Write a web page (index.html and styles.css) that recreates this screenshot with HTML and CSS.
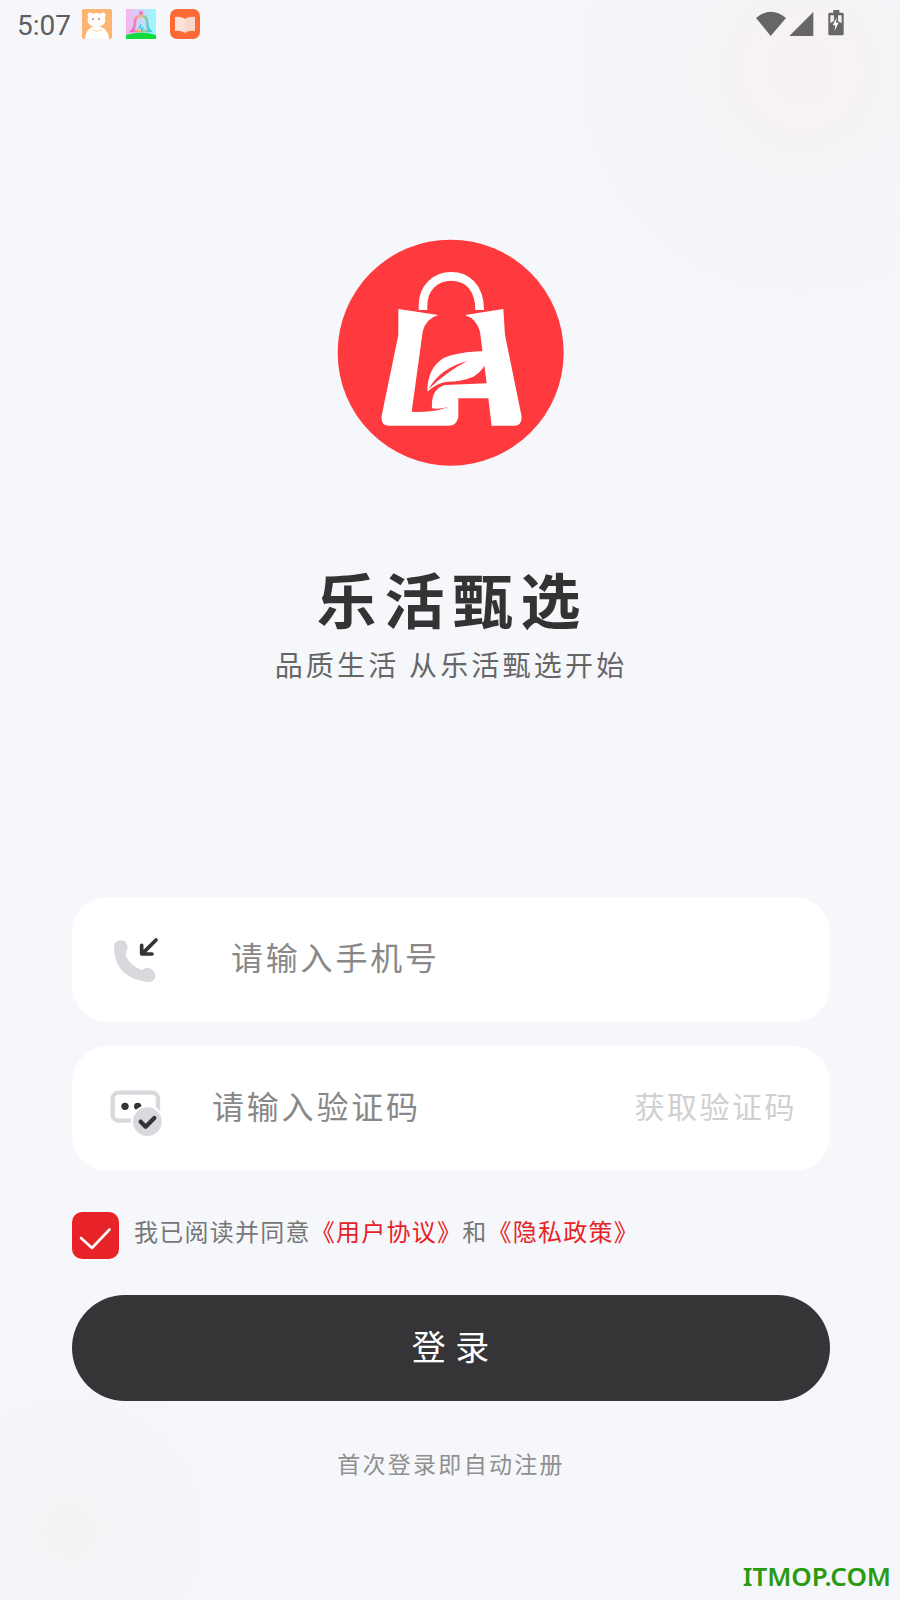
FILE: index.html
```html
<!DOCTYPE html>
<html lang="zh-CN">
<head>
    <meta charset="UTF-8">
    <meta name="viewport" content="width=device-width, initial-scale=1.0">
    <title>乐活甄选</title>
    <link rel="stylesheet" href="styles.css">
</head>
<body>
    <div class="page">
        <div class="status-bar">
            <span class="status-time">5:07</span>
            <div class="status-apps">
                <svg class="app-icon" viewBox="0 0 30 30">
                    <rect width="30" height="30" rx="2" fill="#fcb46e"/>
                    <circle cx="8" cy="6" r="2.5" fill="#fff"/>
                    <circle cx="21" cy="6" r="2.5" fill="#fff"/>
                    <ellipse cx="14.5" cy="11" rx="9" ry="7" fill="#fff"/>
                    <path d="M3 30 Q4 18 14.5 17 Q26 18 27 30 Z" fill="#fff"/>
                    <circle cx="11" cy="10" r="1" fill="#c98a50"/>
                    <circle cx="17" cy="10" r="1" fill="#c98a50"/>
                    <path d="M10 21 Q15 24 20 21" stroke="#fcd3a8" fill="none"/>
                </svg>
                <svg class="app-icon" viewBox="0 0 30 30">
                    <defs>
                        <linearGradient id="bellBg" x1="0" y1="0" x2="1" y2="0">
                            <stop offset="0" stop-color="#fab4ee"/>
                            <stop offset="1" stop-color="#96fbff"/>
                        </linearGradient>
                        <linearGradient id="bellLine" x1="0" y1="0" x2="1" y2="0">
                            <stop offset="0" stop-color="#f062d0"/>
                            <stop offset="0.5" stop-color="#f2c060"/>
                            <stop offset="1" stop-color="#30d0e0"/>
                        </linearGradient>
                    </defs>
                    <rect width="30" height="30" fill="url(#bellBg)"/>
                    <path d="M0 30 V26 Q15 21 30 26 V30 Z" fill="#0fdc3c"/>
                    <path d="M6 22 Q9 19 9 13 Q9 7 15 7 Q21 7 21 13 Q21 19 24 22 Z" fill="none" stroke="url(#bellLine)" stroke-width="2.6"/>
                    <circle cx="15" cy="4" r="2.2" fill="#f07ac0"/>
                    <path d="M15 14 L12 20 L15 19 L15 26 L18 18 L15 19 Z" fill="#40c8e0"/>
                </svg>
                <svg class="app-icon" viewBox="0 0 30 30">
                    <rect width="30" height="30" rx="7" fill="#fe6a35"/>
                    <path d="M5 8 Q11 7 15 10 V24 Q11 21 5 22 Z" fill="#fbe3d8"/>
                    <path d="M25 8 Q19 7 15 10 V24 Q19 21 25 22 Z" fill="#f8d8ca"/>
                </svg>
            </div>
            <svg class="status-right" viewBox="0 0 510 150">
                <path d="M78 54 Q122 16 168 54 L122 108 Z" fill="#666"/>
                <path d="M178 108 L250 36 V108 Z" fill="#666"/>
                <path d="M295 42 Q295 38 299 38 H310 V30 H328 V38 H337 Q341 38 341 42 V102 Q341 106 337 106 H299 Q295 106 295 102 Z" fill="#666"/>
                <path d="M301 46 H312 V62 L301 70 Z M324 46 H335 V70 L324 64 Z" fill="#eee"/>
                <path d="M320 52 L308 76 H316 L313 94 L326 68 H318 Z" fill="#fff"/>
            </svg>
        </div>

        <div class="brand">
            <svg class="logo" viewBox="0 0 720 720">
                <circle cx="362" cy="353" r="339" fill="#fe3a3f"/>
                <path d="M279 225 V212 C279 155 320 124 363 124 C410 124 449 155 449 225" fill="none" stroke="#fff" stroke-width="26"/>
                <path d="M205 222 L325 240 Q288 250 278 290 L245 530 Q310 535 362 513 Q335 524 306 520 Q302 462 345 450 L470 445 L450 290 Q440 252 405 240 L520 222 L525 300 L575 545 Q575 572 552 572 L485 572 L475 490 L385 490 L385 545 Q380 572 355 572 L175 572 Q152 572 155 542 L205 300 Z" fill="#fff"/>
                <path d="M292 470 Q292 400 340 370 Q380 350 470 348 L485 337 Q472 400 430 425 Q395 440 350 440 Q318 445 292 470 Z" fill="#fff"/>
                <path d="M296 462 Q330 400 412 378 Q350 410 296 462 Z" fill="#fe3a3f"/>
            </svg>
            <h1 class="brand-name">乐活甄选</h1>
            <p class="brand-slogan">品质生活 从乐活甄选开始</p>
        </div>

        <div class="login-form">
            <div class="field field-phone">
                <svg class="field-icon" viewBox="0 0 300 180">
                    <path d="M72 75 Q72 55 92 55 Q112 55 113 78 Q110 90 106 100 Q120 130 155 145 Q165 135 178 138 Q197 145 196 165 Q192 182 170 180 Q72 165 72 75 Z" fill="#d8d9dd"/>
                    <path d="M198 54 L158 94 M155 70 V96 H186" fill="none" stroke="#333438" stroke-width="11" stroke-linecap="round" stroke-linejoin="round"/>
                </svg>
                <span class="field-text">请输入手机号</span>
            </div>
            <div class="field field-code">
                <svg class="field-icon" viewBox="0 0 300 180">
                    <rect x="68" y="65" width="136" height="84" rx="18" fill="none" stroke="#d8d9dd" stroke-width="13"/>
                    <circle cx="105" cy="106" r="11" fill="#333438"/>
                    <circle cx="143" cy="106" r="11" fill="#333438"/>
                    <circle cx="172" cy="152" r="46" fill="#d8d9dd" stroke="#fff" stroke-width="6"/>
                    <path d="M152 152 L167 167 L193 141" fill="none" stroke="#333438" stroke-width="13" stroke-linecap="round" stroke-linejoin="round"/>
                </svg>
                <span class="field-text">请输入验证码</span>
                <span class="get-code">获取验证码</span>
            </div>
        </div>

        <div class="agree">
            <span class="checkbox">
                <svg viewBox="0 0 47 47">
                    <path d="M9 26 L20 36 L37.5 17.5" fill="none" stroke="#fff" stroke-width="2.6" stroke-linecap="round" stroke-linejoin="round"/>
                </svg>
            </span>
            <span class="agree-text">我已阅读并同意<a class="agree-link">《用户协议》</a>和<a class="agree-link">《隐私政策》</a></span>
        </div>

        <button class="login-btn">登 录</button>
        <p class="login-tip">首次登录即自动注册</p>

        <div class="watermark">ITMOP.COM</div>
    </div>
</body>
</html>
```
FILE: styles.css
```css
* {
    box-sizing: border-box;
}
body {
    margin: 0;
    font-family: "Noto Sans CJK SC", "Noto Sans", sans-serif;
}
.page {
    position: relative;
    width: 900px;
    height: 1600px;
    overflow: hidden;
    background-color: #f5f7fb;
    background-image:
        radial-gradient(circle 270px at 800px 70px, #f6f1f4 0%, rgba(246, 241, 244, 0) 100%),
        radial-gradient(circle 170px at 70px 1530px, #f5f2f5 0%, rgba(245, 242, 245, 0) 100%);
}
.status-bar {
    display: flex;
    align-items: center;
    height: 50px;
    padding-left: 17px;
}
.status-time {
    width: 65px;
    font-family: Roboto, sans-serif;
    font-size: 28px;
    color: #5f5f5f;
}
.status-apps {
    display: flex;
    gap: 14px;
    margin-top: -2px;
}
.app-icon {
    width: 30px;
    height: 30px;
}
.status-right {
    width: 170px;
    height: 50px;
    margin-left: auto;
}
.brand {
    display: flex;
    flex-direction: column;
    align-items: center;
    padding-top: 185px;
}
.logo {
    width: 240px;
    height: 240px;
}
.brand-name {
    margin: 81px 0 0;
    padding-left: 5px;
    font-size: 60px;
    line-height: 84px;
    font-weight: 700;
    letter-spacing: 8px;
    color: #333;
}
.brand-slogan {
    margin: 4px 0 0;
    padding-left: 2px;
    font-size: 28px;
    line-height: 40px;
    letter-spacing: 3.2px;
    color: #666;
}
.login-form {
    display: flex;
    flex-direction: column;
    gap: 24px;
    margin: 213px 70px 0 72px;
}
.field {
    display: flex;
    align-items: center;
    height: 125px;
    padding: 0 33px 0 18px;
    border-radius: 36px;
    background-color: #fff;
}
.field-icon {
    flex: none;
    width: 100px;
    height: 60px;
    margin-top: -16px;
    overflow: visible;
}
.field-text {
    margin-top: -8px;
    font-size: 32px;
    letter-spacing: 2.8px;
    color: #888;
}
.field-phone .field-text {
    margin-left: 41px;
}
.field-code .field-text {
    margin-left: 22px;
}
.get-code {
    margin-top: -8px;
    margin-left: auto;
    font-size: 30px;
    letter-spacing: 2.5px;
    color: #d0d0d0;
}
.agree {
    display: flex;
    align-items: center;
    gap: 15px;
    margin: 41px 0 0 72px;
}
.checkbox {
    display: block;
    width: 47px;
    height: 47px;
    border-radius: 10px;
    background-color: #e82327;
}
.checkbox svg {
    display: block;
}
.agree-text {
    margin-top: -10px;
    font-size: 24px;
    letter-spacing: 1.25px;
    color: #777;
}
.agree-link {
    color: #e82327;
}
.login-btn {
    display: block;
    width: 758px;
    height: 106px;
    margin: 36px 0 0 72px;
    padding: 0 0 6px;
    border: none;
    border-radius: 53px;
    background-color: #353537;
    font-family: inherit;
    font-size: 34px;
    letter-spacing: 1px;
    color: #fff;
}
.login-tip {
    margin: 45px 0 0;
    padding-left: 2px;
    text-align: center;
    font-size: 23px;
    line-height: 34px;
    letter-spacing: 2.3px;
    color: #909090;
}
.watermark {
    position: absolute;
    right: 9px;
    bottom: 6px;
    font-family: "Noto Sans", sans-serif;
    font-size: 26px;
    line-height: 36px;
    font-weight: 600;
    color: #2a9a10;
}
```
